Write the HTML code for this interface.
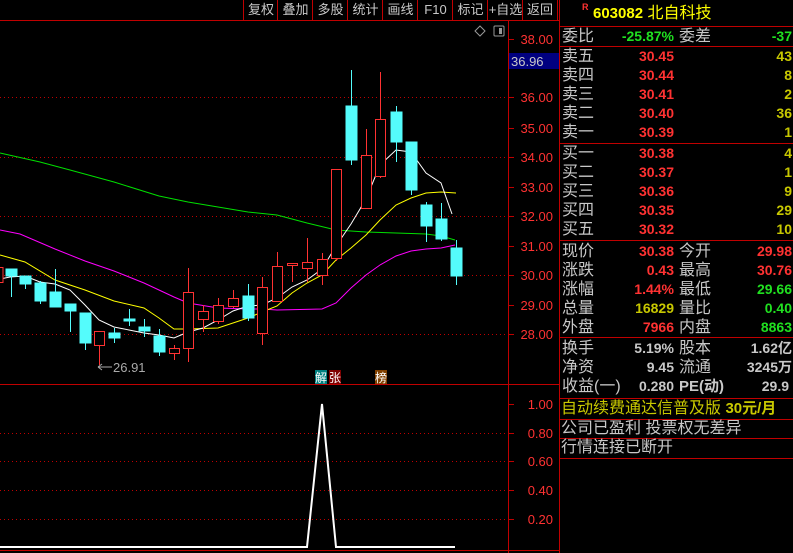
<!DOCTYPE html>
<html><head><meta charset="utf-8"><style>
body{margin:0;background:#000;width:793px;height:553px;overflow:hidden;position:relative;font-family:"Liberation Sans","Noto Sans CJK SC",sans-serif}
.a{position:absolute;white-space:nowrap}
.tb{position:absolute;top:0;height:20px;line-height:20px;color:#c8c8c8;font-size:13px;text-align:center;border-left:1px solid #c00000}
.l{position:absolute;left:562px;color:#c8c8c8;font-size:16px;height:19px;line-height:19px}
.v{position:absolute;right:119px;font-size:14px;font-weight:bold;height:19px;line-height:19px;text-align:right}
.l2{position:absolute;left:679px;color:#c8c8c8;font-size:16px;height:19px;line-height:19px}
.v2{position:absolute;right:1px;font-size:14px;font-weight:bold;height:19px;line-height:19px;text-align:right}
.hl{position:absolute;left:559px;width:234px;height:1px;background:#c00000}
.r{color:#ff3232}.g{color:#20e020}.y{color:#c8c800}.w{color:#c8c8c8}
</style></head><body>
<svg width="793" height="553" style="position:absolute;left:0;top:0">
<line x1="0" y1="20.5" x2="559" y2="20.5" stroke="#c00000"/>
<line x1="508.5" y1="20" x2="508.5" y2="553" stroke="#c00000"/>
<line x1="559.5" y1="0" x2="559.5" y2="553" stroke="#c00000"/>
<line x1="0" y1="384.5" x2="559" y2="384.5" stroke="#c00000"/>
<line x1="0" y1="550.5" x2="559" y2="550.5" stroke="#c00000"/>
<g stroke="#c00000" stroke-dasharray="1,3">
<line x1="0" y1="97.5" x2="508" y2="97.5"/><line x1="0" y1="157.5" x2="508" y2="157.5"/><line x1="0" y1="216.5" x2="508" y2="216.5"/><line x1="0" y1="275.5" x2="508" y2="275.5"/><line x1="0" y1="334.5" x2="508" y2="334.5"/>
<line x1="0" y1="433.5" x2="508" y2="433.5"/><line x1="0" y1="461.5" x2="508" y2="461.5"/><line x1="0" y1="490.5" x2="508" y2="490.5"/><line x1="0" y1="519.5" x2="508" y2="519.5"/>
</g>
<g stroke="#c00000">
<line x1="508" y1="39.5" x2="514" y2="39.5"/><line x1="508" y1="97.5" x2="514" y2="97.5"/><line x1="508" y1="128.5" x2="514" y2="128.5"/><line x1="508" y1="157.5" x2="514" y2="157.5"/><line x1="508" y1="187.5" x2="514" y2="187.5"/><line x1="508" y1="216.5" x2="514" y2="216.5"/><line x1="508" y1="246.5" x2="514" y2="246.5"/><line x1="508" y1="275.5" x2="514" y2="275.5"/><line x1="508" y1="305.5" x2="514" y2="305.5"/><line x1="508" y1="334.5" x2="514" y2="334.5"/>
<line x1="508" y1="404.5" x2="514" y2="404.5"/><line x1="508" y1="433.5" x2="514" y2="433.5"/><line x1="508" y1="461.5" x2="514" y2="461.5"/><line x1="508" y1="490.5" x2="514" y2="490.5"/><line x1="508" y1="519.5" x2="514" y2="519.5"/>
</g>
<g font-family="Liberation Sans" font-size="13" fill="#ff3232" text-anchor="end">
<text x="553" y="44">38.00</text><text x="553" y="102">36.00</text><text x="553" y="133">35.00</text><text x="553" y="162">34.00</text><text x="553" y="192">33.00</text><text x="553" y="221">32.00</text><text x="553" y="251">31.00</text><text x="553" y="280">30.00</text><text x="553" y="310">29.00</text><text x="553" y="339">28.00</text>
<text x="553" y="409">1.00</text><text x="553" y="438">0.80</text><text x="553" y="466">0.60</text><text x="553" y="495">0.40</text><text x="553" y="524">0.20</text>
</g>
<rect x="509" y="53" width="50" height="16" fill="#000080"/>
<text x="511" y="66" font-family="Liberation Sans" font-size="13" fill="#c8c8c8">36.96</text>
<path d="M480 26 L485 31 L480 36 L475 31Z" fill="none" stroke="#999"/>
<rect x="494" y="26" width="10" height="10" rx="1" fill="none" stroke="#999"/><rect x="499" y="28" width="3" height="6" fill="#999"/>
<polyline fill="none" stroke="#00e000" points="0,153 40,162 70,170 114,182 159,196 188,202 218,207 248,212 277,215 307,223 336,230 366,232 396,233 426,234 441,236 455,240"/>
<polyline fill="none" stroke="#ff00ff" points="0,230 20,234 55,249 85,261 114,271 144,283 174,297 188,303 218,308 248,309 262,309 277,310 322,309 336,303 351,288 366,275 380,265 396,256 411,251 426,249 441,248 455,245"/>
<polyline fill="none" stroke="#ffff00" points="0,255 25,262 55,280 85,290 114,301 144,308 159,318 174,329 188,329 218,328 248,318 262,312 277,306 292,293 307,283 322,275 336,260 351,248 366,235 380,220 396,205 411,198 426,193 441,192 456,193"/>
<polyline fill="none" stroke="#ffffff" points="0,279 10,277 25,276 40,282 55,284 70,290 85,305 99,320 114,327 129,330 144,333 159,335 174,338 188,332 203,328 218,320 233,311 248,306 262,305 277,298 292,287 307,280 322,269 336,246 351,224 366,199 380,165 396,150 411,152 426,173 441,183 452,214"/>
<g fill="#54fcfc" stroke="#54fcfc">
<line x1="11.5" y1="269" x2="11.5" y2="297"/><rect x="6" y="269" width="11" height="7"/>
<line x1="25.5" y1="276" x2="25.5" y2="289"/><rect x="20" y="276" width="11" height="8"/>
<line x1="40.5" y1="281" x2="40.5" y2="304"/><rect x="35" y="283" width="11" height="18"/>
<line x1="55.5" y1="269" x2="55.5" y2="307"/><rect x="50" y="292" width="11" height="15"/>
<line x1="70.5" y1="304" x2="70.5" y2="332"/><rect x="65" y="304" width="11" height="7"/>
<line x1="85.5" y1="313" x2="85.5" y2="350"/><rect x="80" y="313" width="11" height="30"/>
<line x1="114.5" y1="328" x2="114.5" y2="343"/><rect x="109" y="333" width="11" height="5"/>
<line x1="129.5" y1="309" x2="129.5" y2="326"/><rect x="124" y="319" width="11" height="2"/>
<line x1="144.5" y1="319" x2="144.5" y2="337"/><rect x="139" y="327" width="11" height="4"/>
<line x1="159.5" y1="329" x2="159.5" y2="356"/><rect x="154" y="336" width="11" height="16"/>
<line x1="248.5" y1="284" x2="248.5" y2="321"/><rect x="243" y="296" width="11" height="22"/>
<line x1="351.5" y1="70" x2="351.5" y2="165"/><rect x="346" y="106" width="11" height="54"/>
<line x1="396.5" y1="106" x2="396.5" y2="162"/><rect x="391" y="112" width="11" height="30"/>
<line x1="411.5" y1="142" x2="411.5" y2="195"/><rect x="406" y="142" width="11" height="48"/>
<line x1="426.5" y1="202" x2="426.5" y2="242"/><rect x="421" y="205" width="11" height="21"/>
<line x1="441.5" y1="203" x2="441.5" y2="241"/><rect x="436" y="219" width="11" height="20"/>
<line x1="456.5" y1="240" x2="456.5" y2="285"/><rect x="451" y="248" width="11" height="28"/>
</g>
<g fill="#000" stroke="#ff3232">
<line x1="99.5" y1="345" x2="99.5" y2="365"/><rect x="94.5" y="331.5" width="10" height="14"/>
<line x1="174.5" y1="345" x2="174.5" y2="360"/><rect x="169.5" y="348.5" width="10" height="5"/>
<line x1="188.5" y1="268" x2="188.5" y2="362"/><rect x="183.5" y="292.5" width="10" height="56"/>
<line x1="203.5" y1="305" x2="203.5" y2="332"/><rect x="198.5" y="311.5" width="10" height="8"/>
<line x1="218.5" y1="298" x2="218.5" y2="324"/><rect x="213.5" y="305.5" width="10" height="16"/>
<line x1="233.5" y1="290" x2="233.5" y2="308"/><rect x="228.5" y="298.5" width="10" height="8"/>
<line x1="262.5" y1="277" x2="262.5" y2="345"/><rect x="257.5" y="287.5" width="10" height="46"/>
<line x1="277.5" y1="252" x2="277.5" y2="301"/><rect x="272.5" y="266.5" width="10" height="35"/>
<line x1="292.5" y1="263" x2="292.5" y2="282"/><rect x="287.5" y="263.5" width="10" height="2"/>
<line x1="307.5" y1="238" x2="307.5" y2="282"/><rect x="302.5" y="262.5" width="10" height="6"/>
<line x1="322.5" y1="253" x2="322.5" y2="285"/><rect x="317.5" y="259.5" width="10" height="16"/>
<line x1="336.5" y1="169" x2="336.5" y2="261"/><rect x="331.5" y="169.5" width="10" height="89"/>
<line x1="366.5" y1="129" x2="366.5" y2="208"/><rect x="361.5" y="155.5" width="10" height="53"/>
<line x1="380.5" y1="72" x2="380.5" y2="178"/><rect x="375.5" y="119.5" width="10" height="57"/>
<rect x="-6" y="267.5" width="9" height="15"/>
</g>
<path d="M98 367 L112 367 M98 367 L102 364 M98 367 L102 370" stroke="#aaa" fill="none"/>
<text x="113" y="372" font-family="Liberation Sans" font-size="13" fill="#aaa">26.91</text>
<rect x="315" y="370" width="12" height="14" fill="#008080"/><rect x="329" y="370" width="12" height="14" fill="#800000"/><rect x="375" y="370" width="12" height="14" fill="#804000"/>
<g font-size="12" fill="#fff" font-family="Noto Sans CJK SC"><text x="315" y="382">解</text><text x="329" y="382">张</text><text x="375" y="382">榜</text></g>
<polyline fill="none" stroke="#fff" stroke-width="2" points="0,547 307,547 322,404 336,547 455,547"/>
</svg>
<div class="tb" style="left:243px;width:34px">复权</div><div class="tb" style="left:277px;width:35px">叠加</div><div class="tb" style="left:312px;width:35px">多股</div><div class="tb" style="left:347px;width:35px">统计</div><div class="tb" style="left:382px;width:35px">画线</div><div class="tb" style="left:417px;width:35px">F10</div><div class="tb" style="left:452px;width:35px">标记</div><div class="tb" style="left:487px;width:35px">+自选</div><div class="tb" style="left:522px;width:34px;border-right:1px solid #c00000">返回</div>

<div class="a" style="left:582px;top:2px;font-size:9px;color:#ff3232;font-weight:bold">R</div>
<div class="a" style="left:593px;top:4px;font-size:16px;color:#ffff00;line-height:20px"><b style="font-size:15px">603082</b> 北自科技</div>
<div class="hl" style="top:26px"></div>
<div class="l" style="top:27px">委比</div><div class="v g" style="top:27px">-25.87%</div><div class="l2" style="top:27px">委差</div><div class="v2 g" style="top:27px">-37</div>
<div class="hl" style="top:46px"></div>
<div class="l" style="top:47px">卖五</div><div class="v r" style="top:47px">30.45</div><div class="v2 y" style="top:47px">43</div>
<div class="l" style="top:66px">卖四</div><div class="v r" style="top:66px">30.44</div><div class="v2 y" style="top:66px">8</div>
<div class="l" style="top:85px">卖三</div><div class="v r" style="top:85px">30.41</div><div class="v2 y" style="top:85px">2</div>
<div class="l" style="top:104px">卖二</div><div class="v r" style="top:104px">30.40</div><div class="v2 y" style="top:104px">36</div>
<div class="l" style="top:123px">卖一</div><div class="v r" style="top:123px">30.39</div><div class="v2 y" style="top:123px">1</div>
<div class="hl" style="top:143px"></div>
<div class="l" style="top:144px">买一</div><div class="v r" style="top:144px">30.38</div><div class="v2 y" style="top:144px">4</div>
<div class="l" style="top:163px">买二</div><div class="v r" style="top:163px">30.37</div><div class="v2 y" style="top:163px">1</div>
<div class="l" style="top:182px">买三</div><div class="v r" style="top:182px">30.36</div><div class="v2 y" style="top:182px">9</div>
<div class="l" style="top:201px">买四</div><div class="v r" style="top:201px">30.35</div><div class="v2 y" style="top:201px">29</div>
<div class="l" style="top:220px">买五</div><div class="v r" style="top:220px">30.32</div><div class="v2 y" style="top:220px">10</div>
<div class="hl" style="top:240px"></div>
<div class="l" style="top:242px">现价</div><div class="v r" style="top:242px">30.38</div><div class="l2" style="top:242px">今开</div><div class="v2 r" style="top:242px">29.98</div>
<div class="l" style="top:261px">涨跌</div><div class="v r" style="top:261px">0.43</div><div class="l2" style="top:261px">最高</div><div class="v2 r" style="top:261px">30.76</div>
<div class="l" style="top:280px">涨幅</div><div class="v r" style="top:280px">1.44%</div><div class="l2" style="top:280px">最低</div><div class="v2 g" style="top:280px">29.66</div>
<div class="l" style="top:299px">总量</div><div class="v y" style="top:299px">16829</div><div class="l2" style="top:299px">量比</div><div class="v2 g" style="top:299px">0.40</div>
<div class="l" style="top:318px">外盘</div><div class="v r" style="top:318px">7966</div><div class="l2" style="top:318px">内盘</div><div class="v2 g" style="top:318px">8863</div>
<div class="hl" style="top:337px"></div>
<div class="l" style="top:339px">换手</div><div class="v w" style="top:339px">5.19%</div><div class="l2" style="top:339px">股本</div><div class="v2 w" style="top:339px">1.62亿</div>
<div class="l" style="top:358px">净资</div><div class="v w" style="top:358px">9.45</div><div class="l2" style="top:358px">流通</div><div class="v2 w" style="top:358px">3245万</div>
<div class="l" style="top:377px">收益(一)</div><div class="v w" style="top:377px">0.280</div><div class="l2" style="top:377px;font-weight:bold;font-size:15px">PE(动)</div><div class="v2 w" style="top:377px;right:4px">29.9</div>
<div class="hl" style="top:398px"></div>
<div class="l y" style="top:399px;left:561px">自动续费通达信普及版 <b style="font-size:15px">30元/月</b></div>
<div class="hl" style="top:419px"></div>
<div class="l" style="top:419px;left:561px">公司已盈利 投票权无差异</div>
<div class="hl" style="top:438px"></div>
<div class="l" style="top:438px;left:561px">行情连接已断开</div>
<div class="hl" style="top:458px"></div>
</body></html>
